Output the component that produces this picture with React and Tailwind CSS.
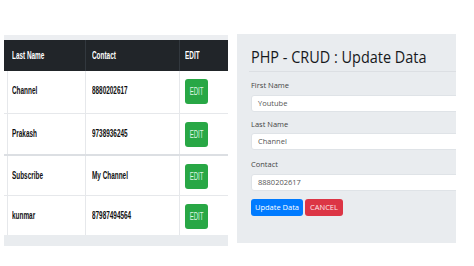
import React from "react";

const rows = [
  { name: "Channel", contact: "8880202617", h: "h-[42px]", w: "font-bold", edit: "EDIT" },
  { name: "Prakash", contact: "9738936245", h: "h-[41px]", w: "font-bold", edit: "EDIT" },
  { name: "Subscribe", contact: "My Channel", h: "h-[41px]", w: "font-bold", edit: "EDIT" },
  { name: "kunmar", contact: "87987494564", h: "h-[40px]", w: "font-semibold", edit: "EDIT" },
];

function Sq({ children, className = "" }) {
  return (
    <span className={"inline-block origin-left scale-x-[0.64] whitespace-nowrap " + className}>
      {children}
    </span>
  );
}

export default function App() {
  return (
    <div className="w-[474px] h-[266px] bg-white overflow-hidden flex pl-[4px] pt-[34px] font-['Liberation_Sans',Arial,sans-serif]">
      {/* Left table */}
      <div className="w-[224px] mt-[1px] flex flex-col text-[10px] text-[#111]">
        <div className="h-[5px] bg-[#eceef1]" />
        <div className="h-[31px] bg-[#212529] text-white font-bold flex items-center">
          <div className="w-[81px] pl-[8px]"><Sq>Last Name</Sq></div>
          <div className="w-[94px] h-full flex items-center pl-[6px] border-l border-[#32383e]"><Sq>Contact</Sq></div>
          <div className="flex-1 h-full flex items-center pl-[5px] border-l border-[#32383e]"><Sq>EDIT</Sq></div>
        </div>
        {rows.map((r, i) => (
          <div
            key={i}
            className={`${r.h} flex bg-white ${i === 0 ? "" : i === 2 ? "border-t-2 border-[#dcdfe3]" : "border-t border-[#e6e8eb]"}`}
          >
            <div className="w-[81px] pl-[3px]">
              <div className={`h-full border-l border-[#e6e8eb] pl-[4px] pt-[12px] ${r.w}`}>
                <Sq>{r.name}</Sq>
              </div>
            </div>
            <div className={`w-[94px] border-l border-[#e6e8eb] pl-[6px] pt-[12px] ${r.w}`}>
              <Sq>{r.contact}</Sq>
            </div>
            <div className="flex-1 border-l border-[#e6e8eb] pl-[5px] pt-[8px]">
              <div className="w-[23px] h-[25px] rounded-[3px] bg-[#28a745] text-[#dff5e3] text-[11px] flex items-center justify-center overflow-hidden">
                <span className="inline-block scale-x-[0.55] whitespace-nowrap">{r.edit}</span>
              </div>
            </div>
          </div>
        ))}
        <div className="h-[11px] bg-[#e9ecef]" />
      </div>

      {/* Right form */}
      <div className="ml-[9px] w-[219px] h-[209px] bg-[#e9ecef] overflow-hidden font-['Open_Sans',sans-serif] text-[#212529]">
        <div className="pl-[14px] pt-[10px]">
          <div className="h-[26px] text-[17px] leading-[26px] whitespace-nowrap font-medium text-[#16191c]">
            <span className="inline-block origin-left scale-x-[0.85]">PHP - CRUD : Update Data</span>
          </div>
          <div className="mt-[1px] border-t border-[#dcdfe3] -ml-[2px]" />
          <div className="mt-[8px] text-[7.5px] leading-[10px] text-[#444]">First Name</div>
          <div className="mt-[5px] h-[17px] bg-white border border-[#dfe3e7] rounded-l-[3px] pl-[6px] text-[7.5px] leading-[15px] text-[#555] w-[220px]">Youtube</div>
          <div className="mt-[7px] text-[7.5px] leading-[10px] text-[#444]">Last Name</div>
          <div className="mt-[4px] h-[17px] bg-white border border-[#dfe3e7] rounded-l-[3px] pl-[6px] text-[7.5px] leading-[15px] text-[#555] w-[220px]">Channel</div>
          <div className="mt-[9px] text-[7.5px] leading-[10px] text-[#444]">Contact</div>
          <div className="mt-[5px] h-[17px] bg-white border border-[#dfe3e7] rounded-l-[3px] pl-[6px] text-[7.5px] leading-[15px] text-[#555] w-[220px]">8880202617</div>
          <div className="mt-[8px] flex gap-[2px]">
            <div className="w-[52px] h-[17px] rounded-[3px] bg-[#007bff] text-white text-[7.5px] flex items-center justify-center whitespace-nowrap">Update Data</div>
            <div className="w-[38px] h-[17px] rounded-[3px] bg-[#dc3545] text-[#fde8ea] text-[7.5px] flex items-center justify-center whitespace-nowrap">CANCEL</div>
          </div>
        </div>
      </div>
    </div>
  );
}
